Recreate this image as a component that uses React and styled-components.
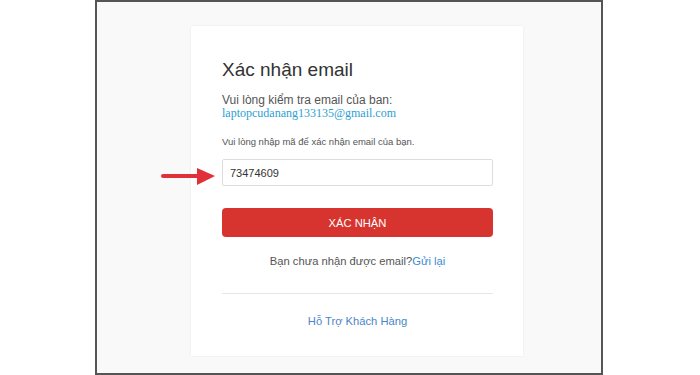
import React from "react";
import styled, { createGlobalStyle } from "styled-components";

const GlobalStyle = createGlobalStyle`
  html, body {
    margin: 0;
    padding: 0;
    background: #ffffff;
    font-family: "Liberation Sans", Arial, sans-serif;
  }
`;

const Frame = styled.div`
  box-sizing: border-box;
  margin-left: 95px;
  width: 508px;
  height: 375px;
  border: 2px solid #555555;
  background: #f9f9f9;
  padding: 24px 0 0 94px;
`;

const Card = styled.div`
  box-sizing: border-box;
  width: 332px;
  height: 330px;
  background: #ffffff;
  box-shadow: 0 0 2px rgba(0, 0, 0, 0.08);
  padding: 33px 30px 0 31px;
  display: flex;
  flex-direction: column;
`;

const Title = styled.h1`
  margin: 0;
  font-size: 19px;
  line-height: 22px;
  font-weight: normal;
  color: #333333;
`;

const Notice = styled.div`
  margin-top: 12.5px;
  font-size: 12px;
  line-height: 13px;
  color: #555555;
`;

const Email = styled.a`
  display: block;
  font-family: "Liberation Serif", "Times New Roman", serif;
  font-size: 12px;
  line-height: 13px;
  color: #2a9fd3;
  text-decoration: none;
`;

const Hint = styled.div`
  margin-top: 16.5px;
  font-size: 9.5px;
  line-height: 12px;
  color: #555555;
`;

const InputRow = styled.div`
  position: relative;
  margin-top: 11px;
`;

const CodeInput = styled.input`
  box-sizing: border-box;
  width: 271px;
  height: 27px;
  border: 1px solid #dddddd;
  border-radius: 2px;
  padding: 0 7px;
  font-family: "Liberation Sans", Arial, sans-serif;
  font-size: 11px;
  color: #333333;
  background: #ffffff;
  outline: none;
`;

const Arrow = styled.svg`
  position: absolute;
  left: -62px;
  top: 7px;
`;

const SubmitButton = styled.button`
  margin-top: 22px;
  width: 271px;
  height: 29px;
  border: none;
  border-radius: 4px;
  background: #d7342f;
  color: #ffffff;
  font-family: "Liberation Sans", Arial, sans-serif;
  font-size: 11.2px;
  cursor: pointer;
`;

const Resend = styled.div`
  margin-top: 16.5px;
  text-align: center;
  font-size: 11.2px;
  line-height: 14px;
  color: #555555;
`;

const Link = styled.a`
  color: ${(p) => p.color || "#3a8bd6"};
  text-decoration: none;
`;

const Divider = styled.hr`
  margin: 25px 0 0;
  border: none;
  border-top: 1px solid #e6e6e6;
  width: 271px;
`;

const Support = styled.div`
  margin-top: 20px;
  text-align: center;
  font-size: 11.2px;
  line-height: 14px;
`;

export default function App() {
  return (
    <>
      <GlobalStyle />
      <Frame>
        <Card>
          <Title>Xác nhận email</Title>
          <Notice>
            Vui lòng kiểm tra email của ban:
            <Email href="#">laptopcudanang133135@gmail.com</Email>
          </Notice>
          <Hint>Vui lòng nhập mã để xác nhận email của bạn.</Hint>
          <InputRow>
            <Arrow width="56" height="20" viewBox="0 0 56 20">
              <line x1="3" y1="10" x2="40" y2="10" stroke="#e0303a" strokeWidth="4" strokeLinecap="round" />
              <polygon points="37,2 55,10 37,19" fill="#e0303a" />
            </Arrow>
            <CodeInput defaultValue="73474609" />
          </InputRow>
          <SubmitButton>XÁC NHẬN</SubmitButton>
          <Resend>
            Bạn chưa nhận được email?<Link href="#">Gửi lại</Link>
          </Resend>
          <Divider />
          <Support>
            <Link href="#" color="#4a86c8">Hỗ Trợ Khách Hàng</Link>
          </Support>
        </Card>
      </Frame>
    </>
  );
}
